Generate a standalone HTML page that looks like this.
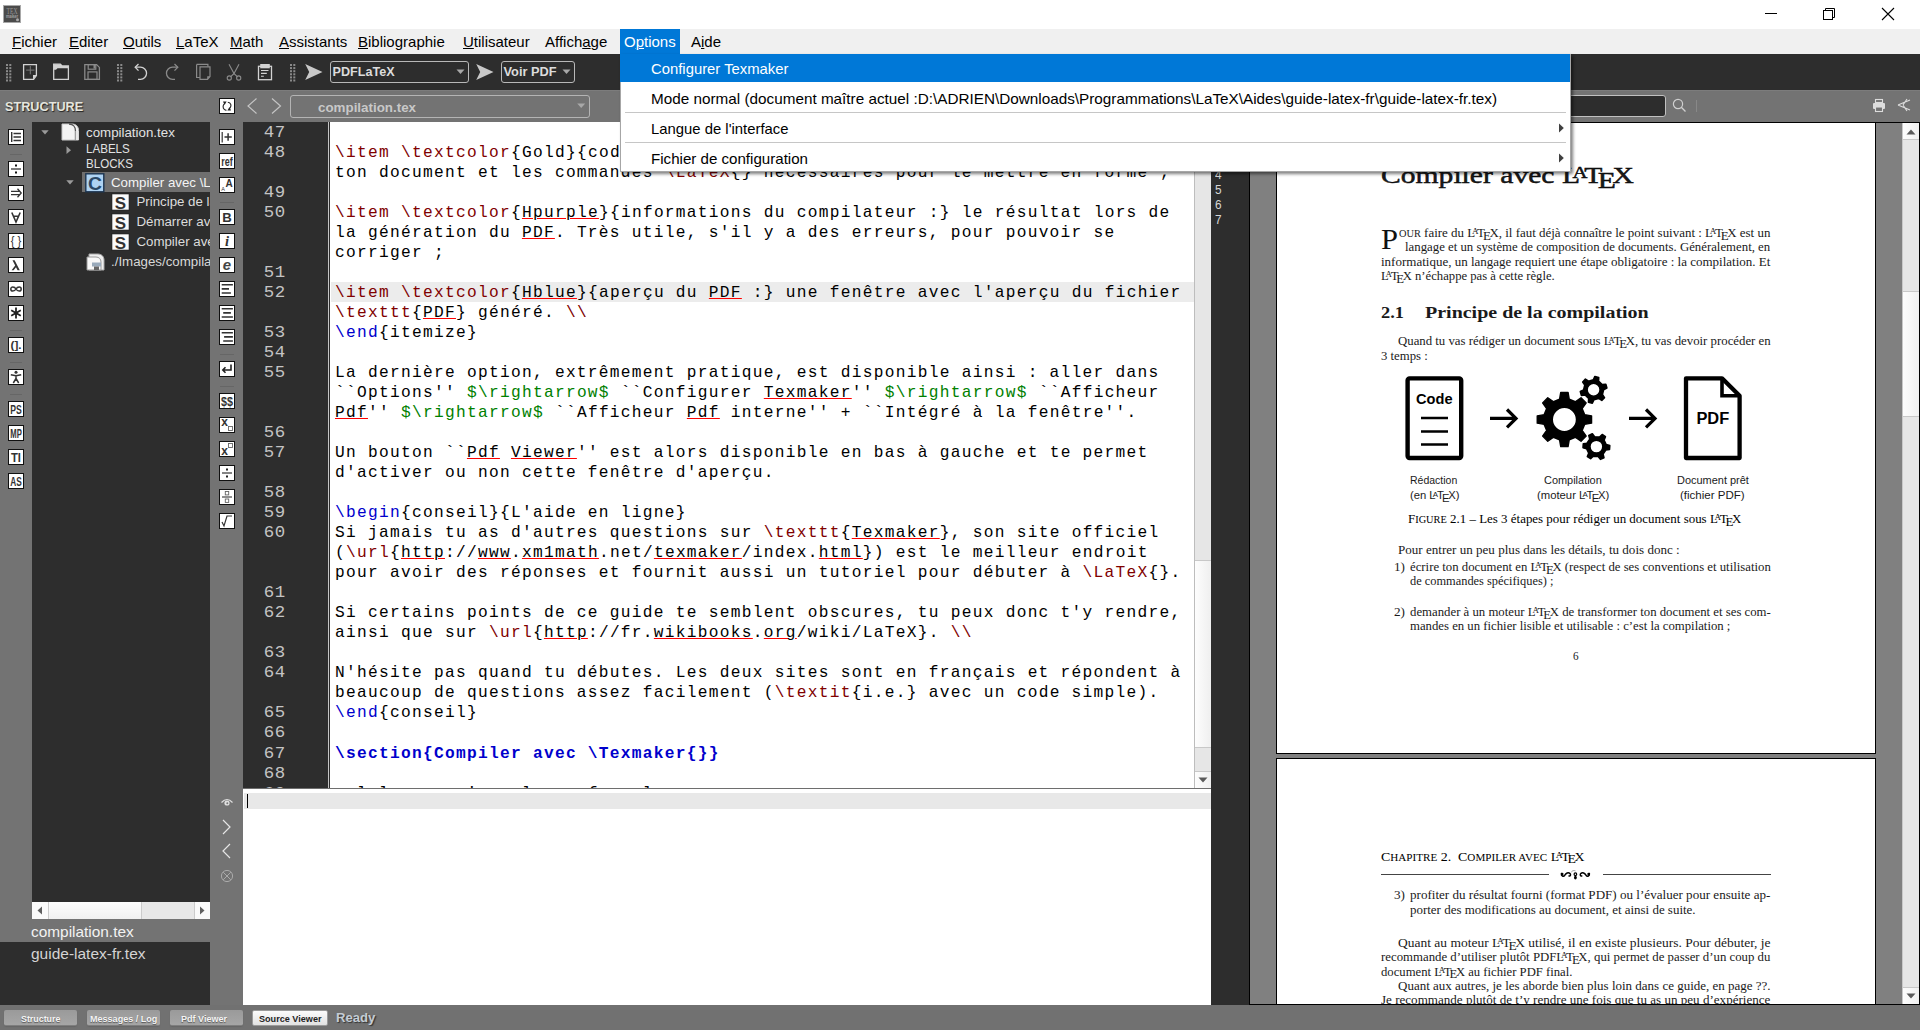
<!DOCTYPE html>
<html><head><meta charset="utf-8"><style>
*{margin:0;padding:0;box-sizing:border-box}
html,body{width:1920px;height:1030px;overflow:hidden;background:#737373;font-family:"Liberation Sans",sans-serif}
.a{position:absolute}
.t{position:absolute;white-space:pre;line-height:1}
u{text-decoration-thickness:1px;text-underline-offset:1px}
</style></head><body>
<div class="a" style="left:0px;top:0px;width:1920px;height:29px;background:#fff;"></div>
<svg class="a" style="left:3px;top:5px" width="18" height="18" viewBox="0 0 18 18"><rect x="0.5" y="0.5" width="17" height="17" fill="#4b4b4b" stroke="#a8a8a8"></rect><text x="9" y="8.8" text-anchor="middle" font-family="Liberation Serif" font-size="7.5" fill="#9a9a9a" textLength="11" lengthAdjust="spacingAndGlyphs">TEX</text><rect x="5.8" y="11" width="12" height="0" fill="none"></rect><text x="9" y="13" text-anchor="middle" font-family="Liberation Sans" font-weight="bold" font-size="4.5" fill="#a0a0a0" textLength="12" lengthAdjust="spacingAndGlyphs">maker</text><circle cx="14.5" cy="14.8" r="1.5" fill="#aaa"></circle></svg>
<div class="a" style="left:1765px;top:13px;width:12px;height:1px;background:#000;"></div>
<svg class="a" style="left:1820px;top:5px" width="18" height="18"><rect x="3.5" y="5.5" width="9" height="9" fill="none" stroke="#000"></rect><path d="M5.5 5.5V3.5H14.5V12.5H12.5" fill="none" stroke="#000"></path></svg>
<svg class="a" style="left:1880px;top:6px" width="16" height="16"><path d="M2 2L14 14M14 2L2 14" stroke="#000" stroke-width="1.1"></path></svg>
<div class="a" style="left:0px;top:29px;width:1920px;height:25px;background:#f0f0f0;"></div>
<div class="a" style="left:620px;top:29px;width:60px;height:25px;background:#0078d7;"></div>
<div class="t" style="left:12px;top:34.30px;font-size:15px;color:#000;font-family:'Liberation Sans',sans-serif;text-decoration-thickness:1px;text-underline-offset:1px"><u>F</u>ichier</div>
<div class="t" style="left:69px;top:34.30px;font-size:15px;color:#000;font-family:'Liberation Sans',sans-serif;text-decoration-thickness:1px;text-underline-offset:1px"><u>E</u>diter</div>
<div class="t" style="left:123px;top:34.30px;font-size:15px;color:#000;font-family:'Liberation Sans',sans-serif;text-decoration-thickness:1px;text-underline-offset:1px"><u>O</u>utils</div>
<div class="t" style="left:176px;top:34.30px;font-size:15px;color:#000;font-family:'Liberation Sans',sans-serif;text-decoration-thickness:1px;text-underline-offset:1px"><u>L</u>aTeX</div>
<div class="t" style="left:230px;top:34.30px;font-size:15px;color:#000;font-family:'Liberation Sans',sans-serif;text-decoration-thickness:1px;text-underline-offset:1px"><u>M</u>ath</div>
<div class="t" style="left:279px;top:34.30px;font-size:15px;color:#000;font-family:'Liberation Sans',sans-serif;text-decoration-thickness:1px;text-underline-offset:1px"><u>A</u>ssistants</div>
<div class="t" style="left:358px;top:34.30px;font-size:15px;color:#000;font-family:'Liberation Sans',sans-serif;text-decoration-thickness:1px;text-underline-offset:1px"><u>B</u>ibliographie</div>
<div class="t" style="left:463px;top:34.30px;font-size:15px;color:#000;font-family:'Liberation Sans',sans-serif;text-decoration-thickness:1px;text-underline-offset:1px"><u>U</u>tilisateur</div>
<div class="t" style="left:545px;top:34.30px;font-size:15px;color:#000;font-family:'Liberation Sans',sans-serif;text-decoration-thickness:1px;text-underline-offset:1px">Affich<u>a</u>ge</div>
<div class="t" style="left:624px;top:34.30px;font-size:15px;color:#fff;font-family:'Liberation Sans',sans-serif;text-decoration-thickness:1px;text-underline-offset:1px">O<u>p</u>tions</div>
<div class="t" style="left:691px;top:34.30px;font-size:15px;color:#000;font-family:'Liberation Sans',sans-serif;text-decoration-thickness:1px;text-underline-offset:1px">A<u>i</u>de</div>
<div class="a" style="left:0px;top:54px;width:1920px;height:36px;background:#2d2d2d;"></div>
<div class="a" style="left:0px;top:54px;width:1920px;height:36px;background:#2d2d2d;"></div>
<svg class="a" style="left:6px;top:64px" width="6" height="18"><rect x="0.0" y="0.0" width="2" height="2" fill="#8a8a8a"></rect><rect x="3.3" y="0.0" width="2" height="2" fill="#8a8a8a"></rect><rect x="0.0" y="3.1" width="2" height="2" fill="#8a8a8a"></rect><rect x="3.3" y="3.1" width="2" height="2" fill="#8a8a8a"></rect><rect x="0.0" y="6.2" width="2" height="2" fill="#8a8a8a"></rect><rect x="3.3" y="6.2" width="2" height="2" fill="#8a8a8a"></rect><rect x="0.0" y="9.3" width="2" height="2" fill="#8a8a8a"></rect><rect x="3.3" y="9.3" width="2" height="2" fill="#8a8a8a"></rect><rect x="0.0" y="12.4" width="2" height="2" fill="#8a8a8a"></rect><rect x="3.3" y="12.4" width="2" height="2" fill="#8a8a8a"></rect><rect x="0.0" y="15.5" width="2" height="2" fill="#8a8a8a"></rect><rect x="3.3" y="15.5" width="2" height="2" fill="#8a8a8a"></rect></svg>
<svg class="a" style="left:117px;top:64px" width="6" height="18"><rect x="0.0" y="0.0" width="2" height="2" fill="#8a8a8a"></rect><rect x="3.3" y="0.0" width="2" height="2" fill="#8a8a8a"></rect><rect x="0.0" y="3.1" width="2" height="2" fill="#8a8a8a"></rect><rect x="3.3" y="3.1" width="2" height="2" fill="#8a8a8a"></rect><rect x="0.0" y="6.2" width="2" height="2" fill="#8a8a8a"></rect><rect x="3.3" y="6.2" width="2" height="2" fill="#8a8a8a"></rect><rect x="0.0" y="9.3" width="2" height="2" fill="#8a8a8a"></rect><rect x="3.3" y="9.3" width="2" height="2" fill="#8a8a8a"></rect><rect x="0.0" y="12.4" width="2" height="2" fill="#8a8a8a"></rect><rect x="3.3" y="12.4" width="2" height="2" fill="#8a8a8a"></rect><rect x="0.0" y="15.5" width="2" height="2" fill="#8a8a8a"></rect><rect x="3.3" y="15.5" width="2" height="2" fill="#8a8a8a"></rect></svg>
<svg class="a" style="left:290px;top:64px" width="6" height="18"><rect x="0.0" y="0.0" width="2" height="2" fill="#8a8a8a"></rect><rect x="3.3" y="0.0" width="2" height="2" fill="#8a8a8a"></rect><rect x="0.0" y="3.1" width="2" height="2" fill="#8a8a8a"></rect><rect x="3.3" y="3.1" width="2" height="2" fill="#8a8a8a"></rect><rect x="0.0" y="6.2" width="2" height="2" fill="#8a8a8a"></rect><rect x="3.3" y="6.2" width="2" height="2" fill="#8a8a8a"></rect><rect x="0.0" y="9.3" width="2" height="2" fill="#8a8a8a"></rect><rect x="3.3" y="9.3" width="2" height="2" fill="#8a8a8a"></rect><rect x="0.0" y="12.4" width="2" height="2" fill="#8a8a8a"></rect><rect x="3.3" y="12.4" width="2" height="2" fill="#8a8a8a"></rect><rect x="0.0" y="15.5" width="2" height="2" fill="#8a8a8a"></rect><rect x="3.3" y="15.5" width="2" height="2" fill="#8a8a8a"></rect></svg>
<svg class="a" style="left:22px;top:63px" width="17" height="18" viewBox="0 0 17 18"><path d="M1.6 1.6H14.4V12.6L11.6 16.4H1.6Z" fill="none" stroke="#d2d2d2" stroke-width="1.3"></path><path d="M11 16.4L11 12H15Z" fill="#d2d2d2"></path><path d="M8.3 2.9V11.3M4.1 7.1H12.5" stroke="#7a7a7a" stroke-width="1"></path></svg>
<svg class="a" style="left:53px;top:63px" width="17" height="18" viewBox="0 0 17 18"><path d="M0.7 1.2H7.3L9.2 3H15.4V16.4H0.7Z" fill="none" stroke="#d2d2d2" stroke-width="1.3"></path><path d="M0.7 1.2H7.3L9.2 3H15.4V5.2H4.5L3 6.8H0.7Z" fill="#d2d2d2"></path></svg>
<svg class="a" style="left:84px;top:63px" width="17" height="18" viewBox="0 0 17 18"><path d="M0.8 1.6H12.6L15.4 4.4V16.4H0.8Z" fill="none" stroke="#8a8a8a" stroke-width="1.3"></path><rect x="4.2" y="1.6" width="7.6" height="4.6" fill="none" stroke="#8a8a8a" stroke-width="1.2"></rect><rect x="9.5" y="2" width="1.8" height="3.6" fill="#8a8a8a"></rect><rect x="4" y="8.9" width="9" height="7.5" fill="none" stroke="#8a8a8a" stroke-width="1.2"></rect></svg>
<svg class="a" style="left:134px;top:63px" width="14" height="18" viewBox="0 0 14 18"><path d="M1.2 4.2H6.5A5.8 5.8 0 0 1 6.5 16.3H4" fill="none" stroke="#d2d2d2" stroke-width="1.3"></path><path d="M4.5 1L1.2 4.2L4.5 7.6" fill="none" stroke="#d2d2d2" stroke-width="1.3"></path></svg>
<svg class="a" style="left:165px;top:63px" width="14" height="18" viewBox="0 0 14 18"><path d="M12.8 4.2H7.5A5.8 5.8 0 0 0 7.5 16.3H10" fill="none" stroke="#8a8a8a" stroke-width="1.3"></path><path d="M9.5 1L12.8 4.2L9.5 7.6" fill="none" stroke="#8a8a8a" stroke-width="1.3"></path></svg>
<svg class="a" style="left:196px;top:63px" width="15" height="18" viewBox="0 0 15 18"><path d="M0.6 1.4H11.9V3.6" fill="none" stroke="#8a8a8a" stroke-width="1.2"></path><path d="M0.6 1.4V14.5H3.9" fill="none" stroke="#8a8a8a" stroke-width="1.2"></path><path d="M4 3.9H14V13.5L11.5 16.4H4Z" fill="none" stroke="#8a8a8a" stroke-width="1.2"></path><path d="M11.2 16.4V13.2H14Z" fill="#8a8a8a"></path></svg>
<svg class="a" style="left:226px;top:63px" width="16" height="18" viewBox="0 0 16 18"><path d="M3 1.2L8 10.5L13 1.2" fill="none" stroke="#8a8a8a" stroke-width="1.1"></path><path d="M8 10.5L4.5 13.8M8 10.5L11.5 13.8" stroke="#8a8a8a" stroke-width="1.1"></path><circle cx="3.3" cy="15" r="2.1" fill="none" stroke="#8a8a8a" stroke-width="1.1"></circle><circle cx="12.7" cy="15" r="2.1" fill="none" stroke="#8a8a8a" stroke-width="1.1"></circle></svg>
<svg class="a" style="left:257px;top:63px" width="16" height="18" viewBox="0 0 16 18"><rect x="1.5" y="3.3" width="13" height="13.4" fill="none" stroke="#d2d2d2" stroke-width="1.3"></rect><rect x="3.2" y="1" width="9.6" height="4.3" fill="#d2d2d2"></rect><path d="M4 7.5H11.5M4 10.4H9.8M4 13.2H6.8" stroke="#d2d2d2" stroke-width="1.1"></path></svg>
<svg class="a" style="left:305px;top:63px" width="18" height="18" viewBox="0 0 18 18"><path d="M0.2 1L17.5 9L0.2 17L4.2 9Z" fill="#c8c8c8"></path></svg>
<svg class="a" style="left:476px;top:63px" width="18" height="18" viewBox="0 0 18 18"><path d="M0.2 1L17.5 9L0.2 17L4.2 9Z" fill="#c8c8c8"></path></svg>
<div class="a" style="left:330px;top:61px;width:139px;height:22px;border:1.3px solid #b8b8b8;border-radius:3px"></div>
<div class="t" style="left:332.5px;top:66.13px;font-size:12.6px;color:#dcdcdc;font-family:'Liberation Sans',sans-serif;font-weight:bold;">PDFLaTeX</div>
<svg class="a" style="left:456px;top:69px" width="9" height="6" viewBox="0 0 9 6"><path d="M0.5 0.5H8.5L4.5 5Z" fill="#a8a8a8"></path></svg>
<div class="a" style="left:501px;top:61px;width:74px;height:22px;border:1.3px solid #b8b8b8;border-radius:3px"></div>
<div class="t" style="left:503.5px;top:66.16px;font-size:12.8px;color:#dcdcdc;font-family:'Liberation Sans',sans-serif;font-weight:bold;">Voir PDF</div>
<svg class="a" style="left:562px;top:69px" width="9" height="6" viewBox="0 0 9 6"><path d="M0.5 0.5H8.5L4.5 5Z" fill="#a8a8a8"></path></svg>
<div class="a" style="left:0px;top:90px;width:1920px;height:1px;background:#7c7c7c;"></div>
<div class="t" style="left: 4.5px; top: 100.27px; font-size: 13.5px; color: rgb(230, 230, 222); font-family: &quot;Liberation Sans&quot;, sans-serif; font-weight: bold; text-shadow: rgb(34, 34, 34) 1px 1px 1px; transform: scaleX(0.9393); transform-origin: 0px 0px;">STRUCTURE</div>
<div class="a" style="left:32px;top:122px;width:178px;height:780px;background:#2d2d2d;"></div>
<svg class="a" style="left:8px;top:129px" width="16" height="16" viewBox="0 0 16 16"><rect x="0.5" y="0.5" width="15" height="15" fill="#fff" stroke="#111"></rect><rect x="3" y="3" width="1.4" height="10" fill="#333"></rect><path d="M5.5 4.5H13M5.5 8H13M5.5 11.5H13" stroke="#333" stroke-width="1.6"></path></svg>
<svg class="a" style="left:8px;top:161px" width="16" height="16" viewBox="0 0 16 16"><rect x="0.5" y="0.5" width="15" height="15" fill="#fff" stroke="#111"></rect><path d="M3 8H13" stroke="#333" stroke-width="1.3"></path><rect x="7" y="3.5" width="2" height="2" fill="#111"></rect><rect x="7" y="10.5" width="2" height="2" fill="#111"></rect></svg>
<svg class="a" style="left:8px;top:185px" width="16" height="16" viewBox="0 0 16 16"><rect x="0.5" y="0.5" width="15" height="15" fill="#fff" stroke="#111"></rect><path d="M3 6.3H11.5M3 9.7H11.5M9.5 3.8L13.2 8L9.5 12.2" fill="none" stroke="#333" stroke-width="1.3"></path></svg>
<svg class="a" style="left:8px;top:209px" width="16" height="16" viewBox="0 0 16 16"><rect x="0.5" y="0.5" width="15" height="15" fill="#fff" stroke="#111"></rect><path d="M3.8 3.5L8 13L12.2 3.5M5.5 7.3H10.5" fill="none" stroke="#333" stroke-width="1.6"></path></svg>
<svg class="a" style="left:8px;top:233px" width="16" height="16" viewBox="0 0 16 16"><rect x="0.5" y="0.5" width="15" height="15" fill="#fff" stroke="#111"></rect><text x="8" y="12" text-anchor="middle" font-family="Liberation Sans" font-size="12" font-weight="normal" fill="#333" textLength="10.5" lengthAdjust="spacingAndGlyphs">{ }</text></svg>
<svg class="a" style="left:8px;top:257px" width="16" height="16" viewBox="0 0 16 16"><rect x="0.5" y="0.5" width="15" height="15" fill="#fff" stroke="#111"></rect><path d="M4.5 3.2H6.6L11.8 13.3H9.6L8 10.2L5.6 13.3H3.6L7.2 8.5Z" fill="#333"></path></svg>
<svg class="a" style="left:8px;top:281px" width="16" height="16" viewBox="0 0 16 16"><rect x="0.5" y="0.5" width="15" height="15" fill="#fff" stroke="#111"></rect><path d="M8 8C6.5 5.2 2.8 5.2 2.8 8C2.8 10.8 6.5 10.8 8 8C9.5 5.2 13.2 5.2 13.2 8C13.2 10.8 9.5 10.8 8 8Z" fill="none" stroke="#333" stroke-width="1.5"></path></svg>
<svg class="a" style="left:8px;top:305px" width="16" height="16" viewBox="0 0 16 16"><rect x="0.5" y="0.5" width="15" height="15" fill="#fff" stroke="#111"></rect><path d="M8 2.5V13.5M3.2 5.2L12.8 10.8M12.8 5.2L3.2 10.8" stroke="#222" stroke-width="1.8"></path></svg>
<svg class="a" style="left:8px;top:337px" width="16" height="16" viewBox="0 0 16 16"><rect x="0.5" y="0.5" width="15" height="15" fill="#fff" stroke="#111"></rect><text x="8" y="12.3" text-anchor="middle" font-family="Liberation Sans" font-size="11" font-weight="bold" fill="#333" textLength="11" lengthAdjust="spacingAndGlyphs">(].</text></svg>
<svg class="a" style="left:8px;top:369px" width="16" height="16" viewBox="0 0 16 16"><rect x="0.5" y="0.5" width="15" height="15" fill="#fff" stroke="#111"></rect><circle cx="8" cy="3.3" r="1.5" fill="#333"></circle><path d="M2.8 5.8L8 6.8L13.2 5.8M8 6.8V9.8M8 9.5L5.3 14M8 9.5L10.7 14" fill="none" stroke="#333" stroke-width="1.5"></path></svg>
<svg class="a" style="left:8px;top:401px" width="16" height="16" viewBox="0 0 16 16"><rect x="0.5" y="0.5" width="15" height="15" fill="#fff" stroke="#111"></rect><text x="8" y="13" text-anchor="middle" font-family="Liberation Sans" font-size="12.5" font-weight="bold" fill="#333" textLength="11.5" lengthAdjust="spacingAndGlyphs">PS</text></svg>
<svg class="a" style="left:8px;top:425px" width="16" height="16" viewBox="0 0 16 16"><rect x="0.5" y="0.5" width="15" height="15" fill="#fff" stroke="#111"></rect><text x="8" y="13" text-anchor="middle" font-family="Liberation Sans" font-size="12.5" font-weight="bold" fill="#333" textLength="11.5" lengthAdjust="spacingAndGlyphs">MP</text></svg>
<svg class="a" style="left:8px;top:449px" width="16" height="16" viewBox="0 0 16 16"><rect x="0.5" y="0.5" width="15" height="15" fill="#fff" stroke="#111"></rect><text x="8" y="13" text-anchor="middle" font-family="Liberation Sans" font-size="12.5" font-weight="bold" fill="#333" textLength="10" lengthAdjust="spacingAndGlyphs">TI</text></svg>
<svg class="a" style="left:8px;top:473px" width="16" height="16" viewBox="0 0 16 16"><rect x="0.5" y="0.5" width="15" height="15" fill="#fff" stroke="#111"></rect><text x="8" y="13" text-anchor="middle" font-family="Liberation Sans" font-size="12.5" font-weight="bold" fill="#333" textLength="11.5" lengthAdjust="spacingAndGlyphs">AS</text></svg>
<div class="a" style="left:10px;top:154px;width:12px;height:1px;background:#666;"></div>
<div class="a" style="left:10px;top:330px;width:12px;height:1px;background:#666;"></div>
<div class="a" style="left:10px;top:362px;width:12px;height:1px;background:#666;"></div>
<div class="a" style="left:10px;top:394px;width:12px;height:1px;background:#666;"></div>
<svg class="a" style="left:219px;top:98px" width="16" height="16" viewBox="0 0 16 16"><rect x="0.5" y="0.5" width="15" height="15" fill="#fff" stroke="#111"></rect><path d="M7.4 12.4C4.4 12 3 8.8 5 6" fill="none" stroke="#222" stroke-width="1.15"></path><path d="M4 3.6L7.6 3.6L5.6 7Z" fill="#222"></path><path d="M8.8 4.2C11.8 4.6 13 7.6 11 10.2" fill="none" stroke="#222" stroke-width="1.15"></path><path d="M12 12.6L8.4 12.5L10.5 9Z" fill="#222"></path></svg>
<svg class="a" style="left:219px;top:129px" width="16" height="16" viewBox="0 0 16 16"><rect x="0.5" y="0.5" width="15" height="15" fill="#fff" stroke="#111"></rect><path d="M3.2 3V13.5" stroke="#333" stroke-width="1.2"></path><path d="M5.5 8H12.8M9.1 4.3V11.7" stroke="#333" stroke-width="1.5"></path></svg>
<svg class="a" style="left:219px;top:153px" width="16" height="16" viewBox="0 0 16 16"><rect x="0.5" y="0.5" width="15" height="15" fill="#fff" stroke="#111"></rect><text x="8" y="12.6" text-anchor="middle" font-family="Liberation Sans" font-size="12" font-weight="bold" fill="#333" textLength="11.5" lengthAdjust="spacingAndGlyphs">ref</text></svg>
<svg class="a" style="left:219px;top:177px" width="16" height="16" viewBox="0 0 16 16"><rect x="0.5" y="0.5" width="15" height="15" fill="#fff" stroke="#111"></rect><text x="10" y="10" text-anchor="middle" font-family="Liberation Sans" font-size="10" font-weight="bold" fill="#333">A</text><text x="4" y="14" text-anchor="middle" font-family="Liberation Sans" font-size="5.5" fill="#333">A</text></svg>
<svg class="a" style="left:219px;top:209px" width="16" height="16" viewBox="0 0 16 16"><rect x="0.5" y="0.5" width="15" height="15" fill="#fff" stroke="#111"></rect><text x="8" y="13.2" text-anchor="middle" font-family="Liberation Sans" font-size="13.5" font-weight="bold" fill="#333" textLength="9.5" lengthAdjust="spacingAndGlyphs">B</text></svg>
<svg class="a" style="left:219px;top:233px" width="16" height="16" viewBox="0 0 16 16"><rect x="0.5" y="0.5" width="15" height="15" fill="#fff" stroke="#111"></rect><text x="8" y="13.3" text-anchor="middle" font-family="Liberation Serif" font-size="14.5" font-weight="bold" font-style="italic" fill="#333">i</text></svg>
<svg class="a" style="left:219px;top:257px" width="16" height="16" viewBox="0 0 16 16"><rect x="0.5" y="0.5" width="15" height="15" fill="#fff" stroke="#111"></rect><text x="8" y="13" text-anchor="middle" font-family="Liberation Sans" font-size="15" font-weight="bold" font-style="italic" fill="#444">e</text></svg>
<svg class="a" style="left:219px;top:281px" width="16" height="16" viewBox="0 0 16 16"><rect x="0.5" y="0.5" width="15" height="15" fill="#fff" stroke="#111"></rect><path d="M2.7 3.8H13.9M2.7 7.9H10M2.7 12H11.9" stroke="#333" stroke-width="1.6"></path></svg>
<svg class="a" style="left:219px;top:305px" width="16" height="16" viewBox="0 0 16 16"><rect x="0.5" y="0.5" width="15" height="15" fill="#fff" stroke="#111"></rect><path d="M2.7 3.8H13.9M4.2 7.9H11.9M2.7 12H13.9" stroke="#333" stroke-width="1.6"></path></svg>
<svg class="a" style="left:219px;top:329px" width="16" height="16" viewBox="0 0 16 16"><rect x="0.5" y="0.5" width="15" height="15" fill="#fff" stroke="#111"></rect><path d="M2.7 3.8H13.9M5.1 7.9H13.9M4.2 12H13.9" stroke="#333" stroke-width="1.6"></path></svg>
<svg class="a" style="left:219px;top:361px" width="16" height="16" viewBox="0 0 16 16"><rect x="0.5" y="0.5" width="15" height="15" fill="#fff" stroke="#111"></rect><path d="M12 3.5V9H4M6.5 6.2L3.8 9L6.5 11.8" fill="none" stroke="#222" stroke-width="1.6"></path></svg>
<svg class="a" style="left:219px;top:393px" width="16" height="16" viewBox="0 0 16 16"><rect x="0.5" y="0.5" width="15" height="15" fill="#fff" stroke="#111"></rect><text x="8" y="12.8" text-anchor="middle" font-family="Liberation Sans" font-size="12" font-weight="bold" fill="#333" textLength="12" lengthAdjust="spacingAndGlyphs">$$</text></svg>
<svg class="a" style="left:219px;top:417px" width="16" height="16" viewBox="0 0 16 16"><rect x="0.5" y="0.5" width="15" height="15" fill="#fff" stroke="#111"></rect><text x="5.5" y="9" text-anchor="middle" font-family="Liberation Sans" font-size="12" font-weight="bold" fill="#333">x</text><rect x="9.5" y="9.5" width="4" height="4" fill="none" stroke="#666" stroke-width="0.9"></rect></svg>
<svg class="a" style="left:219px;top:441px" width="16" height="16" viewBox="0 0 16 16"><rect x="0.5" y="0.5" width="15" height="15" fill="#fff" stroke="#111"></rect><text x="5.5" y="14" text-anchor="middle" font-family="Liberation Sans" font-size="12" font-weight="bold" fill="#333">x</text><rect x="9.5" y="2.5" width="4" height="4" fill="none" stroke="#666" stroke-width="0.9"></rect></svg>
<svg class="a" style="left:219px;top:465px" width="16" height="16" viewBox="0 0 16 16"><rect x="0.5" y="0.5" width="15" height="15" fill="#fff" stroke="#111"></rect><path d="M3 8H13" stroke="#333" stroke-width="1.2"></path><rect x="7" y="3.5" width="2" height="2" fill="#222"></rect><rect x="7" y="10.5" width="2" height="2" fill="#222"></rect></svg>
<svg class="a" style="left:219px;top:489px" width="16" height="16" viewBox="0 0 16 16"><rect x="0.5" y="0.5" width="15" height="15" fill="#fff" stroke="#111"></rect><path d="M3 8H13" stroke="#333" stroke-width="1.1"></path><rect x="6.3" y="2.5" width="3.4" height="3.4" fill="none" stroke="#666" stroke-width="0.9"></rect><rect x="6.3" y="10" width="3.4" height="3.4" fill="none" stroke="#666" stroke-width="0.9"></rect></svg>
<svg class="a" style="left:219px;top:513px" width="16" height="16" viewBox="0 0 16 16"><rect x="0.5" y="0.5" width="15" height="15" fill="#fff" stroke="#111"></rect><path d="M3 9L5 13L8 3H13" fill="none" stroke="#333" stroke-width="1.2"></path></svg>
<div class="a" style="left:220px;top:202px;width:14px;height:1px;background:#666;"></div>
<div class="a" style="left:220px;top:354px;width:14px;height:1px;background:#666;"></div>
<div class="a" style="left:220px;top:386px;width:14px;height:1px;background:#666;"></div>
<div class="a" style="left:32px;top:902px;width:178px;height:17px;background:#e8e8e8;"></div>
<div class="a" style="left:32px;top:902px;width:16px;height:17px;background:#fafafa;"></div>
<div class="a" style="left:48px;top:902px;width:94px;height:17px;background:linear-gradient(#fdfdfd,#f0f0f0);border-left:1px solid #ccc;border-right:1px solid #ccc"></div>
<div class="a" style="left:194px;top:902px;width:16px;height:17px;background:#fafafa;border-left:1px solid #ccc"></div>
<svg class="a" style="left:37px;top:906px" width="6" height="9"><path d="M5 0.5V8.5L0.5 4.5Z" fill="#606060"></path></svg>
<svg class="a" style="left:199px;top:906px" width="6" height="9"><path d="M1 0.5V8.5L5.5 4.5Z" fill="#606060"></path></svg>
<div class="t" style="left: 31.3px; top: 923.6px; font-size: 15px; color: rgb(242, 242, 242); font-family: &quot;Liberation Sans&quot;, sans-serif; transform: scaleX(1.0264); transform-origin: 0px 0px;">compilation.tex</div>
<div class="a" style="left:0px;top:942px;width:210px;height:63px;background:#2d2d2d;"></div>
<div class="t" style="left: 31.3px; top: 946.3px; font-size: 15px; color: rgb(212, 212, 212); font-family: &quot;Liberation Sans&quot;, sans-serif; transform: scaleX(1.0325); transform-origin: 0px 0px;">guide-latex-fr.tex</div>
<svg class="a" style="left:219px;top:795px" width="16" height="92" viewBox="0 0 16 92"><path d="M2.5 7.5Q8 1.5 13.5 7.5" fill="none" stroke="#e0e0e0" stroke-width="1.2"></path><circle cx="8" cy="8" r="2.6" fill="#e0e0e0"></circle><circle cx="8.3" cy="8.3" r="1" fill="#777"></circle><path d="M4 25L11 32L4 39" fill="none" stroke="#e6e6e6" stroke-width="1.2"></path><path d="M11 49L4 56L11 63" fill="none" stroke="#e6e6e6" stroke-width="1.2"></path><circle cx="8" cy="81" r="5.6" fill="none" stroke="#aaa" stroke-width="1"></circle><path d="M4.2 77.2L11.8 84.8M11.8 77.2L4.2 84.8" stroke="#aaa" stroke-width="1"></path></svg>
<div class="a" style="left:243px;top:122px;width:85px;height:666px;background:#2d2d2d;"></div>
<div class="a" style="left:328px;top:122px;width:1px;height:666px;background:#c4c4c4;"></div>
<div class="a" style="left:329px;top:122px;width:1px;height:666px;background:#2d2d2d;"></div>
<div class="a" style="left:330px;top:122px;width:864px;height:666px;background:#fff;"></div>
<div class="a" style="left:331px;top:282px;width:863px;height:20px;background:#ececec;"></div>
<div class="t" style="left:263.8px;top:123.66px;font-size:17.4px;color:#c4c4c4;font-family:'Liberation Mono',monospace;letter-spacing:0.56px">47</div>
<div class="t" style="left:263.8px;top:143.66px;font-size:17.4px;color:#c4c4c4;font-family:'Liberation Mono',monospace;letter-spacing:0.56px">48</div>
<div class="t" style="left:263.8px;top:183.66px;font-size:17.4px;color:#c4c4c4;font-family:'Liberation Mono',monospace;letter-spacing:0.56px">49</div>
<div class="t" style="left:263.8px;top:203.66px;font-size:17.4px;color:#c4c4c4;font-family:'Liberation Mono',monospace;letter-spacing:0.56px">50</div>
<div class="t" style="left:263.8px;top:263.66px;font-size:17.4px;color:#c4c4c4;font-family:'Liberation Mono',monospace;letter-spacing:0.56px">51</div>
<div class="t" style="left:263.8px;top:283.66px;font-size:17.4px;color:#c4c4c4;font-family:'Liberation Mono',monospace;letter-spacing:0.56px">52</div>
<div class="t" style="left:263.8px;top:323.66px;font-size:17.4px;color:#c4c4c4;font-family:'Liberation Mono',monospace;letter-spacing:0.56px">53</div>
<div class="t" style="left:263.8px;top:343.66px;font-size:17.4px;color:#c4c4c4;font-family:'Liberation Mono',monospace;letter-spacing:0.56px">54</div>
<div class="t" style="left:263.8px;top:363.66px;font-size:17.4px;color:#c4c4c4;font-family:'Liberation Mono',monospace;letter-spacing:0.56px">55</div>
<div class="t" style="left:263.8px;top:423.66px;font-size:17.4px;color:#c4c4c4;font-family:'Liberation Mono',monospace;letter-spacing:0.56px">56</div>
<div class="t" style="left:263.8px;top:443.66px;font-size:17.4px;color:#c4c4c4;font-family:'Liberation Mono',monospace;letter-spacing:0.56px">57</div>
<div class="t" style="left:263.8px;top:483.66px;font-size:17.4px;color:#c4c4c4;font-family:'Liberation Mono',monospace;letter-spacing:0.56px">58</div>
<div class="t" style="left:263.8px;top:503.66px;font-size:17.4px;color:#c4c4c4;font-family:'Liberation Mono',monospace;letter-spacing:0.56px">59</div>
<div class="t" style="left:263.8px;top:523.66px;font-size:17.4px;color:#c4c4c4;font-family:'Liberation Mono',monospace;letter-spacing:0.56px">60</div>
<div class="t" style="left:263.8px;top:583.66px;font-size:17.4px;color:#c4c4c4;font-family:'Liberation Mono',monospace;letter-spacing:0.56px">61</div>
<div class="t" style="left:263.8px;top:603.66px;font-size:17.4px;color:#c4c4c4;font-family:'Liberation Mono',monospace;letter-spacing:0.56px">62</div>
<div class="t" style="left:263.8px;top:643.66px;font-size:17.4px;color:#c4c4c4;font-family:'Liberation Mono',monospace;letter-spacing:0.56px">63</div>
<div class="t" style="left:263.8px;top:663.66px;font-size:17.4px;color:#c4c4c4;font-family:'Liberation Mono',monospace;letter-spacing:0.56px">64</div>
<div class="t" style="left:263.8px;top:703.66px;font-size:17.4px;color:#c4c4c4;font-family:'Liberation Mono',monospace;letter-spacing:0.56px">65</div>
<div class="t" style="left:263.8px;top:723.66px;font-size:17.4px;color:#c4c4c4;font-family:'Liberation Mono',monospace;letter-spacing:0.56px">66</div>
<div class="t" style="left:263.8px;top:744.66px;font-size:17.4px;color:#c4c4c4;font-family:'Liberation Mono',monospace;letter-spacing:0.56px">67</div>
<div class="t" style="left:263.8px;top:764.66px;font-size:17.4px;color:#c4c4c4;font-family:'Liberation Mono',monospace;letter-spacing:0.56px">68</div>
<div class="t" style="left:263.8px;top:784.66px;font-size:17.4px;color:#c4c4c4;font-family:'Liberation Mono',monospace;letter-spacing:0.56px">69</div>
<div class="a" style="left:0;top:122px;width:1194px;height:666px;overflow:hidden"><div class="t" style="left:335px;top:22.58px;font-size:16.2px;color:#000;font-family:'Liberation Mono',monospace;letter-spacing:1.28px"><span style="color:#800000">\item</span> <span style="color:#800000">\textcolor</span>{Gold}{code source :} le fichier dans lequel tu vas écrire</div>
<div class="t" style="left:335px;top:42.58px;font-size:16.2px;color:#000;font-family:'Liberation Mono',monospace;letter-spacing:1.28px">ton document et les commandes <span style="color:#800000">\LaTeX</span>{} nécessaires pour le mettre en forme ;</div>
<div class="t" style="left:335px;top:82.58px;font-size:16.2px;color:#000;font-family:'Liberation Mono',monospace;letter-spacing:1.28px"><span style="color:#800000">\item</span> <span style="color:#800000">\textcolor</span>{<span style="text-decoration:underline;text-decoration-color:#ff0000;text-decoration-thickness:1px;text-underline-offset:1px">Hpurple</span>}{informations du compilateur :} le résultat lors de</div>
<div class="t" style="left:335px;top:102.58px;font-size:16.2px;color:#000;font-family:'Liberation Mono',monospace;letter-spacing:1.28px">la génération du <span style="text-decoration:underline;text-decoration-color:#ff0000;text-decoration-thickness:1px;text-underline-offset:1px">PDF</span>. Très utile, s'il y a des erreurs, pour pouvoir se</div>
<div class="t" style="left:335px;top:122.58px;font-size:16.2px;color:#000;font-family:'Liberation Mono',monospace;letter-spacing:1.28px">corriger ;</div>
<div class="t" style="left:335px;top:162.58px;font-size:16.2px;color:#000;font-family:'Liberation Mono',monospace;letter-spacing:1.28px"><span style="color:#800000">\item</span> <span style="color:#800000">\textcolor</span>{<span style="text-decoration:underline;text-decoration-color:#ff0000;text-decoration-thickness:1px;text-underline-offset:1px">Hblue</span>}{aperçu du <span style="text-decoration:underline;text-decoration-color:#ff0000;text-decoration-thickness:1px;text-underline-offset:1px">PDF</span> :} une fenêtre avec l'aperçu du fichier</div>
<div class="t" style="left:335px;top:182.58px;font-size:16.2px;color:#000;font-family:'Liberation Mono',monospace;letter-spacing:1.28px"><span style="color:#800000">\texttt</span>{<span style="text-decoration:underline;text-decoration-color:#ff0000;text-decoration-thickness:1px;text-underline-offset:1px">PDF</span>} généré. <span style="color:#800000">\\</span></div>
<div class="t" style="left:335px;top:202.58px;font-size:16.2px;color:#000;font-family:'Liberation Mono',monospace;letter-spacing:1.28px"><span style="color:#0000cc">\end</span>{itemize}</div>
<div class="t" style="left:335px;top:242.58px;font-size:16.2px;color:#000;font-family:'Liberation Mono',monospace;letter-spacing:1.28px">La dernière option, extrêmement pratique, est disponible ainsi : aller dans</div>
<div class="t" style="left:335px;top:262.58px;font-size:16.2px;color:#000;font-family:'Liberation Mono',monospace;letter-spacing:1.28px">``Options'' <span style="color:#008000">$\rightarrow$</span> ``Configurer <span style="text-decoration:underline;text-decoration-color:#ff0000;text-decoration-thickness:1px;text-underline-offset:1px">Texmaker</span>'' <span style="color:#008000">$\rightarrow$</span> ``Afficheur</div>
<div class="t" style="left:335px;top:282.58px;font-size:16.2px;color:#000;font-family:'Liberation Mono',monospace;letter-spacing:1.28px"><span style="text-decoration:underline;text-decoration-color:#ff0000;text-decoration-thickness:1px;text-underline-offset:1px">Pdf</span>'' <span style="color:#008000">$\rightarrow$</span> ``Afficheur <span style="text-decoration:underline;text-decoration-color:#ff0000;text-decoration-thickness:1px;text-underline-offset:1px">Pdf</span> interne'' + ``Intégré à la fenêtre''.</div>
<div class="t" style="left:335px;top:322.58px;font-size:16.2px;color:#000;font-family:'Liberation Mono',monospace;letter-spacing:1.28px">Un bouton ``<span style="text-decoration:underline;text-decoration-color:#ff0000;text-decoration-thickness:1px;text-underline-offset:1px">Pdf</span> <span style="text-decoration:underline;text-decoration-color:#ff0000;text-decoration-thickness:1px;text-underline-offset:1px">Viewer</span>'' est alors disponible en bas à gauche et te permet</div>
<div class="t" style="left:335px;top:342.58px;font-size:16.2px;color:#000;font-family:'Liberation Mono',monospace;letter-spacing:1.28px">d'activer ou non cette fenêtre d'aperçu.</div>
<div class="t" style="left:335px;top:382.58px;font-size:16.2px;color:#000;font-family:'Liberation Mono',monospace;letter-spacing:1.28px"><span style="color:#0000cc">\begin</span>{conseil}{L'aide en ligne}</div>
<div class="t" style="left:335px;top:402.58px;font-size:16.2px;color:#000;font-family:'Liberation Mono',monospace;letter-spacing:1.28px">Si jamais tu as d'autres questions sur <span style="color:#800000">\texttt</span>{<span style="text-decoration:underline;text-decoration-color:#ff0000;text-decoration-thickness:1px;text-underline-offset:1px">Texmaker</span>}, son site officiel</div>
<div class="t" style="left:335px;top:422.58px;font-size:16.2px;color:#000;font-family:'Liberation Mono',monospace;letter-spacing:1.28px">(<span style="color:#800000">\url</span>{<span style="text-decoration:underline;text-decoration-color:#ff0000;text-decoration-thickness:1px;text-underline-offset:1px">http</span>://<span style="text-decoration:underline;text-decoration-color:#ff0000;text-decoration-thickness:1px;text-underline-offset:1px">www</span>.<span style="text-decoration:underline;text-decoration-color:#ff0000;text-decoration-thickness:1px;text-underline-offset:1px">xm1math</span>.net/<span style="text-decoration:underline;text-decoration-color:#ff0000;text-decoration-thickness:1px;text-underline-offset:1px">texmaker</span>/index.<span style="text-decoration:underline;text-decoration-color:#ff0000;text-decoration-thickness:1px;text-underline-offset:1px">html</span>}) est le meilleur endroit</div>
<div class="t" style="left:335px;top:442.58px;font-size:16.2px;color:#000;font-family:'Liberation Mono',monospace;letter-spacing:1.28px">pour avoir des réponses et fournit aussi un tutoriel pour débuter à <span style="color:#800000">\LaTeX</span>{}.</div>
<div class="t" style="left:335px;top:482.58px;font-size:16.2px;color:#000;font-family:'Liberation Mono',monospace;letter-spacing:1.28px">Si certains points de ce guide te semblent obscures, tu peux donc t'y rendre,</div>
<div class="t" style="left:335px;top:502.58px;font-size:16.2px;color:#000;font-family:'Liberation Mono',monospace;letter-spacing:1.28px">ainsi que sur <span style="color:#800000">\url</span>{<span style="text-decoration:underline;text-decoration-color:#ff0000;text-decoration-thickness:1px;text-underline-offset:1px">http</span>://fr.<span style="text-decoration:underline;text-decoration-color:#ff0000;text-decoration-thickness:1px;text-underline-offset:1px">wikibooks</span>.<span style="text-decoration:underline;text-decoration-color:#ff0000;text-decoration-thickness:1px;text-underline-offset:1px">org</span>/wiki/LaTeX}. <span style="color:#800000">\\</span></div>
<div class="t" style="left:335px;top:542.58px;font-size:16.2px;color:#000;font-family:'Liberation Mono',monospace;letter-spacing:1.28px">N'hésite pas quand tu débutes. Les deux sites sont en français et répondent à</div>
<div class="t" style="left:335px;top:562.58px;font-size:16.2px;color:#000;font-family:'Liberation Mono',monospace;letter-spacing:1.28px">beaucoup de questions assez facilement (<span style="color:#800000">\textit</span>{i.e.} avec un code simple).</div>
<div class="t" style="left:335px;top:582.58px;font-size:16.2px;color:#000;font-family:'Liberation Mono',monospace;letter-spacing:1.28px"><span style="color:#0000cc">\end</span>{conseil}</div>
<div class="t" style="left:335px;top:623.58px;font-size:16.2px;color:#000;font-family:'Liberation Mono',monospace;letter-spacing:1.28px"><span style="color:#0000cc;font-weight:bold">\section{Compiler avec \Texmaker{}}</span></div>
<div class="t" style="left:335px;top:663.58px;font-size:16.2px;color:#000;font-family:'Liberation Mono',monospace;letter-spacing:1.28px">  l l       '    l     f    l</div></div>
<div class="a" style="left:243px;top:788px;width:968px;height:217px;background:#fff;"></div>
<div class="a" style="left:1194px;top:122px;width:17px;height:666px;background:#e6e6e6;border-left:1px solid #bdbdbd"></div>
<div class="a" style="left:1195px;top:560px;width:16px;height:188px;background:linear-gradient(90deg,#fdfdfd,#efefef);border-top:1px solid #c8c8c8;border-bottom:1px solid #c8c8c8"></div>
<div class="a" style="left:1195px;top:771px;width:16px;height:17px;background:linear-gradient(90deg,#fdfdfd,#efefef);border-top:1px solid #c8c8c8"></div>
<svg class="a" style="left:1198px;top:777px" width="10" height="6"><path d="M0.5 0.5H9.5L5 5.5Z" fill="#5a5a5a"></path></svg>
<div class="a" style="left:243px;top:788px;width:968px;height:1px;background:#6e6e6e;"></div>
<div class="a" style="left:244px;top:793px;width:967px;height:16px;background:#e8e8e8;"></div>
<div class="a" style="left:247px;top:794px;width:1px;height:14px;background:#000;"></div>
<svg class="a" style="left:246px;top:97px" width="40" height="18"><path d="M10.5 1.5L2 9L10.5 16.5M26 1.5L34.5 9L26 16.5" fill="none" stroke="#c4c4c4" stroke-width="1.2"></path></svg>
<div class="a" style="left:290px;top:95px;width:300px;height:23px;border:1.3px solid #b4b4b4;border-radius:3px"></div>
<div class="t" style="left: 318px; top: 101.06px; font-size: 13.4px; color: rgb(200, 200, 200); font-family: &quot;Liberation Sans&quot;, sans-serif; font-weight: bold; transform: scaleX(0.9978); transform-origin: 0px 0px;">compilation.tex</div>
<svg class="a" style="left:577px;top:103px" width="9" height="6"><path d="M0.2 0.5H8.2L4.2 5Z" fill="#a8a8a8"></path></svg>
<div class="a" style="left:32px;top:122px;width:178px;height:780px;overflow:hidden"><svg class="a" style="left:9px;top:7.5px" width="9" height="6"><path d="M0.3 0.3H7.7L4 4.6Z" fill="#9a9a9a"></path></svg>
<svg class="a" style="left:34px;top:23.5px" width="6" height="9"><path d="M0.5 0.3V8L5 4.15Z" fill="#9a9a9a"></path></svg>
<svg class="a" style="left:34px;top:57.80000000000001px" width="9" height="6"><path d="M0.3 0.3H7.7L4 4.6Z" fill="#9a9a9a"></path></svg>
<svg class="a" style="left:29px;top:1px" width="19" height="18" viewBox="0 0 19 18"><path d="M1 1H11C15 1 17.5 3.5 17.5 7.5V17H1Z" fill="#f4f4f4" stroke="#c8c8c8"></path><path d="M8 1C12 1 14.5 4 14.5 8V17" fill="none" stroke="#555" stroke-width="1.3"></path><rect x="14.5" y="8" width="3" height="9" fill="#e8e8e8"></rect></svg>
<div class="t" style="left: 54px; top: 3.54px; font-size: 13.3px; color: rgb(226, 226, 226); font-family: &quot;Liberation Sans&quot;, sans-serif; transform: scaleX(1.0011); transform-origin: 0px 0px;">compilation.tex</div>
<div class="t" style="left: 53.6px; top: 20.34px; font-size: 13.3px; color: rgb(226, 226, 226); font-family: &quot;Liberation Sans&quot;, sans-serif; transform: scaleX(0.8711); transform-origin: 0px 0px;">LABELS</div>
<div class="t" style="left: 53.6px; top: 35.34px; font-size: 13.3px; color: rgb(226, 226, 226); font-family: &quot;Liberation Sans&quot;, sans-serif; transform: scaleX(0.8693); transform-origin: 0px 0px;">BLOCKS</div>
<div class="a" style="left:50px;top:50px;width:128px;height:20px;background:#6f6f6f;"></div>
<svg class="a" style="left:53px;top:50.5px" width="20" height="20" viewBox="0 0 20 20"><rect x="0.8" y="0.8" width="18" height="18" fill="#aed3f3" stroke="#1c3550" stroke-width="1.4"></rect><text x="10" y="16.5" text-anchor="middle" font-family="Liberation Sans" font-weight="bold" font-size="19" fill="#2a4866" textLength="14" lengthAdjust="spacingAndGlyphs">C</text></svg>
<div class="t" style="left:79px;top:53.54px;font-size:13.3px;color:#f4f4f4;font-family:'Liberation Sans',sans-serif;">Compiler avec \LaTeX</div>
<svg class="a" style="left:78.5px;top:71px" width="19" height="18" viewBox="0 0 19 18"><rect x="0.7" y="0.7" width="17.6" height="16.6" fill="#fbfbfb" stroke="#222" stroke-width="1.2"></rect><text x="9.5" y="15.5" text-anchor="middle" font-family="Liberation Sans" font-weight="bold" font-size="17" fill="#333">S</text></svg>
<div class="t" style="left:104.4px;top:73.14px;font-size:13.3px;color:#dcdcdc;font-family:'Liberation Sans',sans-serif;">Principe de la compilation</div>
<svg class="a" style="left:78.5px;top:91px" width="19" height="18" viewBox="0 0 19 18"><rect x="0.7" y="0.7" width="17.6" height="16.6" fill="#fbfbfb" stroke="#222" stroke-width="1.2"></rect><text x="9.5" y="15.5" text-anchor="middle" font-family="Liberation Sans" font-weight="bold" font-size="17" fill="#333">S</text></svg>
<div class="t" style="left:104.4px;top:93.14px;font-size:13.3px;color:#dcdcdc;font-family:'Liberation Sans',sans-serif;">Démarrer avec Texmaker</div>
<svg class="a" style="left:78.5px;top:111px" width="19" height="18" viewBox="0 0 19 18"><rect x="0.7" y="0.7" width="17.6" height="16.6" fill="#fbfbfb" stroke="#222" stroke-width="1.2"></rect><text x="9.5" y="15.5" text-anchor="middle" font-family="Liberation Sans" font-weight="bold" font-size="17" fill="#333">S</text></svg>
<div class="t" style="left:104.4px;top:112.74px;font-size:13.3px;color:#dcdcdc;font-family:'Liberation Sans',sans-serif;">Compiler avec Texmaker</div>
<svg class="a" style="left:54px;top:131px" width="19" height="18" viewBox="0 0 19 18"><path d="M3 1H12C15.5 1 18 3.5 18 7V17H3Z" fill="#eee" stroke="#aaa"></path><path d="M1 4H10C13 4 15 6 15 9V17H1Z" fill="#f8f8f8" stroke="#999"></path><rect x="6" y="9.5" width="9" height="4" fill="#9ab"></rect><rect x="8" y="13.5" width="5" height="3.5" fill="#666"></rect></svg>
<div class="t" style="left:79px;top:132.94px;font-size:13.3px;color:#d8d8d8;font-family:'Liberation Sans',sans-serif;">./Images/compilation.png</div></div>
<div class="a" style="left:1540px;top:95px;width:126px;height:22px;background:#2d2d2d;border:1.2px solid #c0c0c0;border-radius:3px"></div>
<svg class="a" style="left:1672px;top:98px" width="16" height="16"><circle cx="6" cy="6" r="4.6" fill="none" stroke="#d0d0d0" stroke-width="1.2"></circle><path d="M9.3 9.3L13.5 13.5" stroke="#d0d0d0" stroke-width="1.3"></path></svg>
<div class="a" style="left:1696px;top:100px;width:1px;height:12px;background:#888;"></div>
<svg class="a" style="left:1872px;top:98px" width="16" height="16"><rect x="3.5" y="1.5" width="7" height="3" fill="none" stroke="#ddd" stroke-width="1.1"></rect><rect x="1" y="5" width="12" height="6" rx="1" fill="#ddd"></rect><rect x="3.5" y="9" width="7" height="4.5" fill="#737373" stroke="#ddd" stroke-width="1.1"></rect></svg>
<svg class="a" style="left:1897px;top:98px" width="16" height="16"><path d="M1 7L13 2M1 7L13 12M6 7L10 1M6 7L10 13" stroke="#ddd" stroke-width="1.1" fill="none"></path></svg>
<div class="a" style="left:1211px;top:122px;width:39px;height:883px;background:#2d2d2d;"></div>
<div class="a" style="left:1249px;top:122px;width:1px;height:883px;background:#000;"></div>
<div class="t" style="left: 1215.2px; top: 122.83px; font-size: 13.2px; color: rgb(214, 214, 214); font-family: &quot;Liberation Sans&quot;, sans-serif; transform: scaleX(0.8987); transform-origin: 0px 0px;">1</div>
<div class="t" style="left: 1215.2px; top: 137.83px; font-size: 13.2px; color: rgb(214, 214, 214); font-family: &quot;Liberation Sans&quot;, sans-serif; transform: scaleX(0.8987); transform-origin: 0px 0px;">2</div>
<div class="t" style="left: 1215.2px; top: 152.83px; font-size: 13.2px; color: rgb(214, 214, 214); font-family: &quot;Liberation Sans&quot;, sans-serif; transform: scaleX(0.8987); transform-origin: 0px 0px;">3</div>
<div class="t" style="left: 1215.2px; top: 167.83px; font-size: 13.2px; color: rgb(214, 214, 214); font-family: &quot;Liberation Sans&quot;, sans-serif; transform: scaleX(0.8987); transform-origin: 0px 0px;">4</div>
<div class="t" style="left: 1215.2px; top: 182.83px; font-size: 13.2px; color: rgb(214, 214, 214); font-family: &quot;Liberation Sans&quot;, sans-serif; transform: scaleX(0.8987); transform-origin: 0px 0px;">5</div>
<div class="t" style="left: 1215.2px; top: 197.83px; font-size: 13.2px; color: rgb(214, 214, 214); font-family: &quot;Liberation Sans&quot;, sans-serif; transform: scaleX(0.8987); transform-origin: 0px 0px;">6</div>
<div class="t" style="left: 1215.2px; top: 212.83px; font-size: 13.2px; color: rgb(214, 214, 214); font-family: &quot;Liberation Sans&quot;, sans-serif; transform: scaleX(0.8987); transform-origin: 0px 0px;">7</div>
<div class="a" style="left:1250px;top:122px;width:670px;height:883px;background:#808080;"></div>
<div class="a" style="left:1250px;top:1004px;width:670px;height:1px;background:#000;"></div>
<div class="a" style="left:1919px;top:122px;width:1px;height:883px;background:#000;"></div>
<div class="a" style="left:1276px;top:122px;width:600px;height:632px;background:#fff;border-left:1px solid #000;border-right:1px solid #000;border-bottom:1px solid #000"></div>
<div class="a" style="left:1276px;top:758px;width:600px;height:246px;background:#fff;border-left:1px solid #000;border-right:1px solid #000;border-top:1px solid #000"></div>
<div class="a" style="left:1250px;top:122px;width:670px;height:1px;background:#000;"></div>
<div class="a" style="left:1902px;top:123px;width:17px;height:881px;background:#e6e6e6;border-left:1px solid #c8c8c8"></div>
<div class="a" style="left:1903px;top:123px;width:16px;height:17px;background:linear-gradient(90deg,#fdfdfd,#f0f0f0);border-bottom:1px solid #c8c8c8"></div>
<div class="a" style="left:1903px;top:987px;width:16px;height:17px;background:linear-gradient(90deg,#fdfdfd,#f0f0f0);border-top:1px solid #c8c8c8"></div>
<div class="a" style="left:1903px;top:291px;width:16px;height:126px;background:linear-gradient(90deg,#fdfdfd,#f0f0f0);border-top:1px solid #c8c8c8;border-bottom:1px solid #c8c8c8"></div>
<svg class="a" style="left:1906px;top:129px" width="10" height="6"><path d="M0.5 5.5H9.5L5 0.5Z" fill="#5a5a5a"></path></svg>
<svg class="a" style="left:1906px;top:993px" width="10" height="6"><path d="M0.5 0.5H9.5L5 5.5Z" fill="#5a5a5a"></path></svg>
<div class="t" style="left: 1381px; top: 163.3px; font-size: 24px; color: rgb(26, 26, 26); font-family: &quot;Liberation Serif&quot;, serif; -webkit-text-stroke: 0.45px rgb(0, 0, 0); transform: scaleX(1.2337); transform-origin: 0px 0px;">Compiler avec L<span style="font-size:0.7em;vertical-align:0.3em;margin-left:-0.36em;margin-right:-0.15em">A</span>T<span style="vertical-align:-0.2em;margin-left:-0.16em;margin-right:-0.11em">E</span>X</div>
<div class="t" style="left: 1380.8px; top: 224.47px; font-size: 30px; color: rgb(17, 17, 17); font-family: &quot;Liberation Serif&quot;, serif; transform: scaleX(1.0187); transform-origin: 0px 0px;">P</div>
<div class="t" style="left: 1399px; top: 227.1px; font-size: 12.9px; color: rgb(26, 26, 26); font-family: &quot;Liberation Serif&quot;, serif; transform: scaleX(1.0041); transform-origin: 0px 0px;"><span style="font-size:0.8em">OUR</span> faire du L<span style="font-size:0.7em;vertical-align:0.3em;margin-left:-0.36em;margin-right:-0.15em">A</span>T<span style="vertical-align:-0.2em;margin-left:-0.16em;margin-right:-0.11em">E</span>X, il faut déjà connaître le point suivant : L<span style="font-size:0.7em;vertical-align:0.3em;margin-left:-0.36em;margin-right:-0.15em">A</span>T<span style="vertical-align:-0.2em;margin-left:-0.16em;margin-right:-0.11em">E</span>X est un</div>
<div class="t" style="left: 1405.2px; top: 241.1px; font-size: 12.9px; color: rgb(26, 26, 26); font-family: &quot;Liberation Serif&quot;, serif; transform: scaleX(0.9934); transform-origin: 0px 0px;">langage et un système de composition de documents. Généralement, en</div>
<div class="t" style="left: 1381px; top: 255.8px; font-size: 12.9px; color: rgb(26, 26, 26); font-family: &quot;Liberation Serif&quot;, serif; transform: scaleX(1.0091); transform-origin: 0px 0px;">informatique, un langage requiert une étape obligatoire : la compilation. Et</div>
<div class="t" style="left: 1381px; top: 270px; font-size: 12.9px; color: rgb(26, 26, 26); font-family: &quot;Liberation Serif&quot;, serif; transform: scaleX(0.9831); transform-origin: 0px 0px;">L<span style="font-size:0.7em;vertical-align:0.3em;margin-left:-0.36em;margin-right:-0.15em">A</span>T<span style="vertical-align:-0.2em;margin-left:-0.16em;margin-right:-0.11em">E</span>X n’échappe pas à cette règle.</div>
<div class="t" style="left: 1381px; top: 305.43px; font-size: 16.8px; color: rgb(26, 26, 26); font-family: &quot;Liberation Serif&quot;, serif; font-weight: bold; transform: scaleX(1.0961); transform-origin: 0px 0px;">2.1</div>
<div class="t" style="left: 1425px; top: 305.43px; font-size: 16.8px; color: rgb(26, 26, 26); font-family: &quot;Liberation Serif&quot;, serif; font-weight: bold; transform: scaleX(1.1908); transform-origin: 0px 0px;">Principe de la compilation</div>
<div class="t" style="left: 1397.8px; top: 335.4px; font-size: 12.9px; color: rgb(26, 26, 26); font-family: &quot;Liberation Serif&quot;, serif; transform: scaleX(0.9925); transform-origin: 0px 0px;">Quand tu vas rédiger un document sous L<span style="font-size:0.7em;vertical-align:0.3em;margin-left:-0.36em;margin-right:-0.15em">A</span>T<span style="vertical-align:-0.2em;margin-left:-0.16em;margin-right:-0.11em">E</span>X, tu vas devoir procéder en</div>
<div class="t" style="left: 1381px; top: 349.7px; font-size: 12.9px; color: rgb(26, 26, 26); font-family: &quot;Liberation Serif&quot;, serif; transform: scaleX(0.988); transform-origin: 0px 0px;">3 temps :</div>
<svg class="a" style="left:1400px;top:370px" width="350" height="95" viewBox="1400 370 350 95"><rect x="1407.6" y="378.4" width="53.6" height="79.6" rx="2" fill="none" stroke="#000" stroke-width="4.4"></rect><path d="M1421 418H1448M1421 431.5H1448M1421 444.5H1448" stroke="#000" stroke-width="2.6"></path><text x="1434.3" y="403.5" text-anchor="middle" font-family="Liberation Sans" font-weight="bold" font-size="14.6" textLength="36.5" lengthAdjust="spacingAndGlyphs">Code</text><path d="M1490 418.4H1516.5M1507 409.5L1516 418.4L1507 427.3" fill="none" stroke="#000" stroke-width="3.2"></path><path d="M1629 418.4H1655.5M1646 409.5L1655 418.4L1646 427.3" fill="none" stroke="#000" stroke-width="3.2"></path><path d="M1559.54 399.27 L1560.75 392.34 L1568.05 392.34 L1569.26 399.27 L1575.27 401.77 L1581.02 397.72 L1586.18 402.88 L1582.13 408.63 L1584.63 414.64 L1591.56 415.85 L1591.56 423.15 L1584.63 424.36 L1582.13 430.37 L1586.18 436.12 L1581.02 441.28 L1575.27 437.23 L1569.26 439.73 L1568.05 446.66 L1560.75 446.66 L1559.54 439.73 L1553.53 437.23 L1547.78 441.28 L1542.62 436.12 L1546.67 430.37 L1544.17 424.36 L1537.24 423.15 L1537.24 415.85 L1544.17 414.64 L1546.67 408.63 L1542.62 402.88 L1547.78 397.72 L1553.53 401.77Z M1576.50 419.50 A12.1 12.1 0 1 0 1552.30 419.50 A12.1 12.1 0 1 0 1576.50 419.50Z" fill="#000" fill-rule="evenodd" stroke="#000" stroke-width="1.4" stroke-linejoin="round"></path><path d="M1593.33 379.80 L1594.91 376.46 L1598.71 377.41 L1598.54 381.11 L1602.12 384.56 L1605.81 384.27 L1606.88 388.03 L1603.60 389.73 L1602.39 394.56 L1604.49 397.61 L1601.77 400.42 L1598.66 398.43 L1593.87 399.80 L1592.29 403.14 L1588.49 402.19 L1588.66 398.49 L1585.08 395.04 L1581.39 395.33 L1580.32 391.57 L1583.60 389.87 L1584.81 385.04 L1582.71 381.99 L1585.43 379.18 L1588.54 381.17Z M1600.10 389.80 A6.5 6.5 0 1 0 1587.10 389.80 A6.5 6.5 0 1 0 1600.10 389.80Z" fill="#000" fill-rule="evenodd" stroke="#000" stroke-width="1.6" stroke-linejoin="round"></path><path d="M1599.56 437.11 L1602.19 434.52 L1605.44 436.71 L1604.02 440.12 L1606.20 444.59 L1609.76 445.58 L1609.49 449.48 L1605.82 449.96 L1603.04 454.08 L1603.97 457.66 L1600.45 459.37 L1598.20 456.44 L1593.24 456.09 L1590.61 458.68 L1587.36 456.49 L1588.78 453.08 L1586.60 448.61 L1583.04 447.62 L1583.31 443.72 L1586.98 443.24 L1589.76 439.12 L1588.83 435.54 L1592.35 433.83 L1594.60 436.76Z M1602.90 446.60 A6.5 6.5 0 1 0 1589.90 446.60 A6.5 6.5 0 1 0 1602.90 446.60Z" fill="#000" fill-rule="evenodd" stroke="#000" stroke-width="1.6" stroke-linejoin="round"></path><path d="M1686 378.3H1722L1739.6 395.8V458H1686Z" fill="none" stroke="#000" stroke-width="4.3" stroke-linejoin="round"></path><path d="M1722 378.3V395.8H1739.6" fill="none" stroke="#000" stroke-width="3.6"></path><text x="1712.8" y="423.8" text-anchor="middle" font-family="Liberation Sans" font-weight="bold" font-size="15.8" textLength="32.8" lengthAdjust="spacingAndGlyphs">PDF</text></svg>
<div class="t" style="left: 1410.2px; top: 475.45px; font-size: 11.4px; color: rgb(26, 26, 26); font-family: &quot;Liberation Sans&quot;, sans-serif; transform: scaleX(0.9221); transform-origin: 0px 0px;">Rédaction</div>
<div class="t" style="left: 1409.5px; top: 490.25px; font-size: 11.4px; color: rgb(26, 26, 26); font-family: &quot;Liberation Sans&quot;, sans-serif; transform: scaleX(0.9869); transform-origin: 0px 0px;">(en L<span style="font-size:0.7em;vertical-align:0.3em;margin-left:-0.36em;margin-right:-0.15em">A</span>T<span style="vertical-align:-0.2em;margin-left:-0.16em;margin-right:-0.11em">E</span>X)</div>
<div class="t" style="left: 1544.2px; top: 475.45px; font-size: 11.4px; color: rgb(26, 26, 26); font-family: &quot;Liberation Sans&quot;, sans-serif; transform: scaleX(0.9608); transform-origin: 0px 0px;">Compilation</div>
<div class="t" style="left: 1537.4px; top: 490.25px; font-size: 11.4px; color: rgb(26, 26, 26); font-family: &quot;Liberation Sans&quot;, sans-serif; transform: scaleX(0.9913); transform-origin: 0px 0px;">(moteur L<span style="font-size:0.7em;vertical-align:0.3em;margin-left:-0.36em;margin-right:-0.15em">A</span>T<span style="vertical-align:-0.2em;margin-left:-0.16em;margin-right:-0.11em">E</span>X)</div>
<div class="t" style="left: 1676.6px; top: 475.45px; font-size: 11.4px; color: rgb(26, 26, 26); font-family: &quot;Liberation Sans&quot;, sans-serif; transform: scaleX(0.9623); transform-origin: 0px 0px;">Document prêt</div>
<div class="t" style="left: 1680px; top: 490.25px; font-size: 11.4px; color: rgb(26, 26, 26); font-family: &quot;Liberation Sans&quot;, sans-serif; transform: scaleX(1.0106); transform-origin: 0px 0px;">(fichier PDF)</div>
<div class="t" style="left: 1408.3px; top: 513.2px; font-size: 12.9px; color: rgb(0, 0, 0); font-family: &quot;Liberation Serif&quot;, serif; transform: scaleX(1.0038); transform-origin: 0px 0px;">F<span style="font-size:0.8em">IGURE</span> 2.1 – Les 3 étapes pour rédiger un document sous L<span style="font-size:0.7em;vertical-align:0.3em;margin-left:-0.36em;margin-right:-0.15em">A</span>T<span style="vertical-align:-0.2em;margin-left:-0.16em;margin-right:-0.11em">E</span>X</div>
<div class="t" style="left: 1398.3px; top: 544px; font-size: 12.9px; color: rgb(26, 26, 26); font-family: &quot;Liberation Serif&quot;, serif; transform: scaleX(1.0139); transform-origin: 0px 0px;">Pour entrer un peu plus dans les détails, tu dois donc :</div>
<div class="t" style="left: 1393.5px; top: 561px; font-size: 12.9px; color: rgb(26, 26, 26); font-family: &quot;Liberation Serif&quot;, serif; transform: scaleX(1.0233); transform-origin: 0px 0px;">1)</div>
<div class="t" style="left: 1409.6px; top: 561px; font-size: 12.9px; color: rgb(26, 26, 26); font-family: &quot;Liberation Serif&quot;, serif; transform: scaleX(0.9904); transform-origin: 0px 0px;">écrire ton document en L<span style="font-size:0.7em;vertical-align:0.3em;margin-left:-0.36em;margin-right:-0.15em">A</span>T<span style="vertical-align:-0.2em;margin-left:-0.16em;margin-right:-0.11em">E</span>X (respect de ses conventions et utilisation</div>
<div class="t" style="left: 1409.6px; top: 575.2px; font-size: 12.9px; color: rgb(26, 26, 26); font-family: &quot;Liberation Serif&quot;, serif; transform: scaleX(0.9606); transform-origin: 0px 0px;">de commandes spécifiques) ;</div>
<div class="t" style="left: 1393.5px; top: 606px; font-size: 12.9px; color: rgb(26, 26, 26); font-family: &quot;Liberation Serif&quot;, serif; transform: scaleX(1.0233); transform-origin: 0px 0px;">2)</div>
<div class="t" style="left: 1409.6px; top: 606px; font-size: 12.9px; color: rgb(26, 26, 26); font-family: &quot;Liberation Serif&quot;, serif; transform: scaleX(0.9914); transform-origin: 0px 0px;">demander à un moteur L<span style="font-size:0.7em;vertical-align:0.3em;margin-left:-0.36em;margin-right:-0.15em">A</span>T<span style="vertical-align:-0.2em;margin-left:-0.16em;margin-right:-0.11em">E</span>X de transformer ton document et ses com-</div>
<div class="t" style="left: 1409.6px; top: 620px; font-size: 12.9px; color: rgb(26, 26, 26); font-family: &quot;Liberation Serif&quot;, serif; transform: scaleX(0.989); transform-origin: 0px 0px;">mandes en un fichier lisible et utilisable : c’est la compilation ;</div>
<div class="t" style="left: 1572.7px; top: 650.2px; font-size: 12.9px; color: rgb(26, 26, 26); font-family: &quot;Liberation Serif&quot;, serif; transform: scaleX(0.8678); transform-origin: 0px 0px;">6</div>
<div class="t" style="left: 1380.7px; top: 850.6px; font-size: 12.9px; color: rgb(0, 0, 0); font-family: &quot;Liberation Serif&quot;, serif; transform: scaleX(1.0782); transform-origin: 0px 0px;">C<span style="font-size:0.8em">HAPITRE</span> 2.  C<span style="font-size:0.8em">OMPILER AVEC</span> L<span style="font-size:0.7em;vertical-align:0.3em;margin-left:-0.36em;margin-right:-0.15em">A</span>T<span style="vertical-align:-0.2em;margin-left:-0.16em;margin-right:-0.11em">E</span>X</div>
<div class="a" style="left:1381px;top:874px;width:167.5px;height:1.4px;background:#444;"></div>
<div class="a" style="left:1603px;top:874px;width:167.5px;height:1.4px;background:#444;"></div>
<svg class="a" style="left:1560px;top:869px" width="31" height="11" viewBox="0 0 31 11"><g fill="none" stroke="#000" stroke-width="1.5" stroke-linecap="round"><path d="M1.4 4.6C1 7 3.5 8 4.8 6.2C6 4.2 8.2 3 9.8 4.3C11.2 5.5 10.4 7.3 9 7"></path><path d="M29.4 4.6C29.8 7 27.3 8 26 6.2C24.8 4.2 22.6 3 21 4.3C19.6 5.5 20.4 7.3 21.8 7"></path><circle cx="15.4" cy="5.2" r="1.3" stroke-width="1.2"></circle><path d="M11.5 2.8C12.5 1.5 14 1.2 15.2 1.8" stroke-width="0.7" stroke="#777"></path></g><circle cx="2.2" cy="5" r="1.3" fill="#000"></circle><circle cx="28.6" cy="5" r="1.3" fill="#000"></circle><ellipse cx="15.4" cy="8.6" rx="1.4" ry="1.9" fill="#000"></ellipse></svg>
<div class="t" style="left: 1393.5px; top: 888.9px; font-size: 12.9px; color: rgb(26, 26, 26); font-family: &quot;Liberation Serif&quot;, serif; transform: scaleX(1.0233); transform-origin: 0px 0px;">3)</div>
<div class="t" style="left: 1410px; top: 888.9px; font-size: 12.9px; color: rgb(26, 26, 26); font-family: &quot;Liberation Serif&quot;, serif; transform: scaleX(1.0149); transform-origin: 0px 0px;">profiter du résultat fourni (format PDF) ou l’évaluer pour ensuite ap-</div>
<div class="t" style="left: 1410px; top: 903.9px; font-size: 12.9px; color: rgb(26, 26, 26); font-family: &quot;Liberation Serif&quot;, serif; transform: scaleX(1.0047); transform-origin: 0px 0px;">porter des modifications au document, et ainsi de suite.</div>
<div class="t" style="left: 1397.8px; top: 937px; font-size: 12.9px; color: rgb(26, 26, 26); font-family: &quot;Liberation Serif&quot;, serif; transform: scaleX(1.0468); transform-origin: 0px 0px;">Quant au moteur L<span style="font-size:0.7em;vertical-align:0.3em;margin-left:-0.36em;margin-right:-0.15em">A</span>T<span style="vertical-align:-0.2em;margin-left:-0.16em;margin-right:-0.11em">E</span>X utilisé, il en existe plusieurs. Pour débuter, je</div>
<div class="t" style="left: 1381px; top: 951px; font-size: 12.9px; color: rgb(26, 26, 26); font-family: &quot;Liberation Serif&quot;, serif; transform: scaleX(0.9936); transform-origin: 0px 0px;">recommande d’utiliser plutôt PDFL<span style="font-size:0.7em;vertical-align:0.3em;margin-left:-0.36em;margin-right:-0.15em">A</span>T<span style="vertical-align:-0.2em;margin-left:-0.16em;margin-right:-0.11em">E</span>X, qui permet de passer d’un coup du</div>
<div class="t" style="left: 1381px; top: 965.8px; font-size: 12.9px; color: rgb(26, 26, 26); font-family: &quot;Liberation Serif&quot;, serif; transform: scaleX(0.9834); transform-origin: 0px 0px;">document L<span style="font-size:0.7em;vertical-align:0.3em;margin-left:-0.36em;margin-right:-0.15em">A</span>T<span style="vertical-align:-0.2em;margin-left:-0.16em;margin-right:-0.11em">E</span>X au fichier PDF final.</div>
<div class="t" style="left: 1397.8px; top: 979.8px; font-size: 12.9px; color: rgb(26, 26, 26); font-family: &quot;Liberation Serif&quot;, serif; transform: scaleX(1.0077); transform-origin: 0px 0px;">Quant aux autres, je les aborde bien plus loin dans ce guide, en page ??.</div>
<div class="a" style="left:0;top:0;width:1920px;height:1004px;overflow:hidden"><div class="t" style="left: 1381px; top: 993.7px; font-size: 12.9px; color: rgb(26, 26, 26); font-family: &quot;Liberation Serif&quot;, serif; transform: scaleX(1.0139); transform-origin: 0px 0px;">Je recommande plutôt de t’y rendre une fois que tu as un peu d’expérience</div></div>
<div class="a" style="left:0px;top:1005px;width:1920px;height:25px;background:#717171;"></div>
<div class="a" style="left:3.75px;top:1010px;width:73.25px;height:16px;background:linear-gradient(#9a9a9a,#a6a6a6);border-bottom:1px solid #7e7e7e;border-radius:2px;box-shadow:0 1px 1px #666"></div><div class="t" style="left: 20.6px; top: 1013.87px; font-size: 9.6px; color: rgb(244, 244, 244); font-family: &quot;Liberation Sans&quot;, sans-serif; font-weight: bold; text-shadow: rgb(85, 85, 85) 0px 1px 1px; transform: scaleX(0.9237); transform-origin: 0px 0px;">Structure</div>
<div class="a" style="left:87px;top:1010px;width:73px;height:16px;background:linear-gradient(#9a9a9a,#a6a6a6);border-bottom:1px solid #7e7e7e;border-radius:2px;box-shadow:0 1px 1px #666"></div><div class="t" style="left: 89.7px; top: 1013.87px; font-size: 9.6px; color: rgb(244, 244, 244); font-family: &quot;Liberation Sans&quot;, sans-serif; font-weight: bold; text-shadow: rgb(85, 85, 85) 0px 1px 1px; transform: scaleX(0.9419); transform-origin: 0px 0px;">Messages / Log</div>
<div class="a" style="left:169.75px;top:1010px;width:73.25px;height:16px;background:linear-gradient(#9a9a9a,#a6a6a6);border-bottom:1px solid #7e7e7e;border-radius:2px;box-shadow:0 1px 1px #666"></div><div class="t" style="left: 181px; top: 1013.87px; font-size: 9.6px; color: rgb(244, 244, 244); font-family: &quot;Liberation Sans&quot;, sans-serif; font-weight: bold; text-shadow: rgb(85, 85, 85) 0px 1px 1px; transform: scaleX(0.9409); transform-origin: 0px 0px;">Pdf Viewer</div>
<div class="a" style="left:252.25px;top:1009.5px;width:75.25px;height:16.5px;background:linear-gradient(#fbfbfb,#e2e2e2);border:1px solid #9a9a9a;border-radius:2px"></div><div class="t" style="left: 258.75px; top: 1013.87px; font-size: 9.6px; color: rgb(30, 30, 30); font-family: &quot;Liberation Sans&quot;, sans-serif; font-weight: bold; transform: scaleX(0.9476); transform-origin: 0px 0px;">Source Viewer</div>
<div class="t" style="left: 335.6px; top: 1012.17px; font-size: 12.2px; color: rgb(196, 204, 212); font-family: &quot;Liberation Sans&quot;, sans-serif; font-weight: bold; text-shadow: rgb(51, 51, 51) 1px 1px 1px; transform: scaleX(1.0767); transform-origin: 0px 0px;">Ready</div>
<div class="a" style="left:620px;top:54px;width:951px;height:118px;box-shadow:2px 2px 3px 0px rgba(0,0,0,0.5)"></div>
<div class="a" style="left:620px;top:54px;width:951px;height:118px;background:#fff;border:1px solid #a6a6a6;border-top:none"></div>
<div class="a" style="left:620px;top:54px;width:950px;height:28px;background:#0078d7;"></div>
<div class="a" style="left:625px;top:112px;width:941px;height:1px;background:#c6c6c6;"></div>
<div class="a" style="left:625px;top:142px;width:941px;height:1px;background:#c6c6c6;"></div>
<div class="t" style="left: 651px; top: 60.8px; font-size: 15px; color: rgb(255, 255, 255); font-family: &quot;Liberation Sans&quot;, sans-serif; transform: scaleX(0.9895); transform-origin: 0px 0px;">Configurer Texmaker</div>
<div class="t" style="left: 651px; top: 90.8px; font-size: 15px; color: rgb(0, 0, 0); font-family: &quot;Liberation Sans&quot;, sans-serif; transform: scaleX(1.0188); transform-origin: 0px 0px;">Mode normal (document maître actuel :D:\ADRIEN\Downloads\Programmations\LaTeX\Aides\guide-latex-fr\guide-latex-fr.tex)</div>
<div class="t" style="left: 651px; top: 120.8px; font-size: 15px; color: rgb(0, 0, 0); font-family: &quot;Liberation Sans&quot;, sans-serif; transform: scaleX(0.9905); transform-origin: 0px 0px;">Langue de l'interface</div>
<div class="t" style="left: 651px; top: 150.8px; font-size: 15px; color: rgb(0, 0, 0); font-family: &quot;Liberation Sans&quot;, sans-serif; transform: scaleX(1.0069); transform-origin: 0px 0px;">Fichier de configuration</div>
<svg class="a" style="left:1558px;top:123px" width="7" height="10"><path d="M1 0.5V9.5L5.8 5Z" fill="#404040"></path></svg>
<svg class="a" style="left:1558px;top:153px" width="7" height="10"><path d="M1 0.5V9.5L5.8 5Z" fill="#404040"></path></svg>
</body></html>
